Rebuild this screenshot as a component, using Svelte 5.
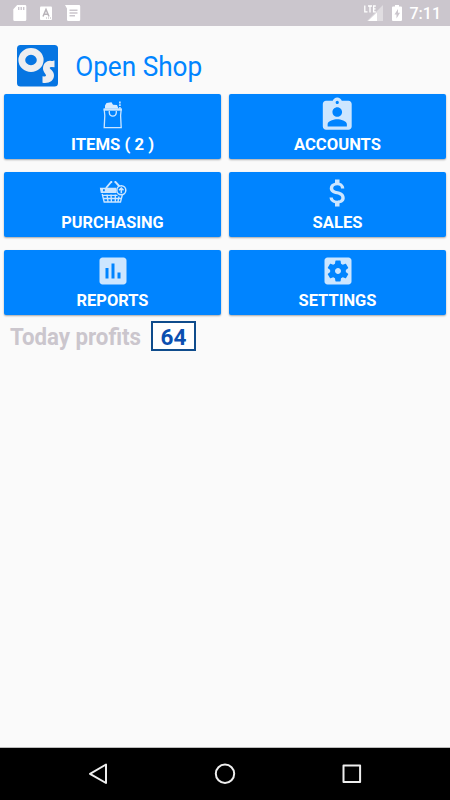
<script>
  const tiles = [
    { icon: 'bag', label: 'ITEMS ( 2 )', width: 83 },
    { icon: 'accounts', label: 'ACCOUNTS', width: 87 },
    { icon: 'basket', label: 'PURCHASING', width: 102.5 },
    { icon: 'dollar', label: 'SALES', width: 50 },
    { icon: 'chart', label: 'REPORTS', width: 72 },
    { icon: 'gear', label: 'SETTINGS', width: 78 }
  ];
</script>

<div class="screen">
  <header class="status">
    <div class="left">
      <svg width="82" height="26" viewBox="0 0 82 26" fill="#fff">
        <path fill-rule="evenodd" d="M17.2 5H25q1.3 0 1.3 1.3v13.4q0 1.3-1.3 1.3H14.600q-1.300 0-1.300-1.300V9.200zM18 7v3h1.400V7zm2.500 0v3h1.400V7zM23 7v3h1.400V7z" />
        <rect x="40" y="6.500" width="12" height="13.500" rx="1" />
        <path d="m43 16.500 3-7 3 7m-5-2.300h4" fill="none" stroke="#b9b4ba" stroke-width="1.500" />
        <path d="M46 18h5" stroke="#b9b4ba" stroke-dasharray="1 1" />
        <path fill-rule="evenodd" d="M65 5h14q1.200 0 1.200 1.200v13.600Q80.200 21 79 21H68.300q-1.300 0-1.300-1.300V8.500zM69.500 9.500V11h8V9.500zm0 2.800v1.500h8v-1.500zm0 2.800v1.500h5.500v-1.500z" />
      </svg>
    </div>
    <div class="right">
      <svg width="42" height="26" viewBox="364 0 42 26">
        <path d="M384 5v16h-16z" fill="#fff" opacity=".4" />
        <path d="M378 12.500V21h-9z" fill="#fff" />
        <path d="M365.800 5.500v6.300h2.700M369 6h4m-2 0v6.500M376.800 6h-2.200v5.800h2.200m-2-2.900h1.800" fill="none" stroke="#fff" stroke-width="1.300" />
        <path fill="#fff" fill-rule="evenodd" d="M396 5h4v1.500h2q1 0 1 1V20q0 1-1 1h-8q-1 0-1-1V7.500q0-1 1-1h2zM399 9l-3.500 5.500h2V18.500l3.500-5.800h-2z" />
      </svg>
      <span class="clock">7:11</span>
    </div>
  </header>

  <div class="brand">
    <svg width="41" height="42" viewBox="0 0 41 42">
      <rect width="41" height="41.500" rx="3.500" fill="#0675e2" />
      <ellipse cx="14" cy="15" rx="9.200" ry="8.600" fill="none" stroke="#eeeef0" stroke-width="6.800" />
      <path d="M37.500 15.500v6.700q-5.200-.7-4.800.8c.4 1.500 4.300 3 4.300 7.300 0 5.700-5 8.500-11.500 7.500v-6.500q3.500.5 3.500-.8c0-1.700-3-3.500-3-7 0-5.500 4.500-8.300 8-7.500 2 .4 2.500-.5 3.500-.5z" fill="#eeeef0" />
    </svg>
    <svg class="title" width="140" height="40" viewBox="0 0 140 40"><text x="0.200" y="28.800" textLength="127" lengthAdjust="spacingAndGlyphs">Open Shop</text></svg>
  </div>

  <main class="grid">
    {#each tiles as t}
      <button>
        <span class="icon">
          {#if t.icon === 'bag'}
            <svg width="36" height="36" viewBox="0 0 36 36">
              <path d="M9.200 12.500h17l-.6 6 .6 12.100H9.200l.6-12.100z" fill="none" stroke="#cde6ff" stroke-width="1.300" />
              <path d="M8.600 11.300h18.200v2.400H8.600z" fill="#cde6ff" opacity=".85" />
              <path d="M10 11.500V8.500l1.500-2.500 5-.7 1.500 2.500 4 .2 1.500 3.500z" fill="#d7ebff" />
              <path d="M24.900 4.500v7.500" stroke="#cde6ff" stroke-width="1.600" stroke-dasharray="1.900 .8" />
              <path d="M14.300 14v2q.5 3.200 3.500 3.200t3.500-3.200v-2" fill="none" stroke="#cde6ff" stroke-width="1.300" />
            </svg>
          {:else if t.icon === 'accounts'}
            <svg class="large" width="38.500" height="38.500" viewBox="0 0 24 24"><path d="M19 3h-4.180C14.400 1.840 13.300 1 12 1c-1.300 0-2.400.84-2.820 2H5c-1.100 0-2 .9-2 2v14c0 1.100.9 2 2 2h14c1.100 0 2-.9 2-2V5c0-1.100-.9-2-2-2zm-7 0c.55 0 1 .45 1 1s-.45 1-1 1-1-.45-1-1 .45-1 1-1zm0 4c1.660 0 3 1.340 3 3s-1.340 3-3 3-3-1.340-3-3 1.340-3 3-3zm6 12H6v-1.400c0-2 4-3.100 6-3.100s6 1.100 6 3.100V19z" /></svg>
          {:else if t.icon === 'basket'}
            <svg width="36" height="36" viewBox="0 0 36 36">
              <path d="m11 13 5.200-6h1M19.500 7h1l4.500 5" fill="none" stroke="#cde6ff" stroke-width="1.900" />
              <path fill-rule="evenodd" d="M4.800 12.800h16.400q-.8 2.700.5 5.200H5.800zM8 14.300v2h1.800v-2z" />
              <path d="m7.200 19 2 8h16.300l1.800-7M7.500 20.300h15M8.500 23.500h18M12 19.500l1 7M16 19.500l.4 7M20.300 19.500v7M24 21.500l-1 5" fill="none" stroke="#cde6ff" stroke-width="1.350" />
              <circle cx="26.300" cy="15.300" r="4.500" fill="#0084ff" stroke="#cde6ff" stroke-width="1.500" />
              <path d="M26.300 18.200v-5m-2.200 2.100 2.200-2.200 2.200 2.200" fill="none" stroke="#cde6ff" stroke-width="1.500" />
            </svg>
          {:else if t.icon === 'dollar'}
            <svg width="36" height="36" viewBox="0 0 24 24"><path d="M11.800 10.900c-2.270-.59-3-1.200-3-2.150 0-1.090 1.010-1.850 2.700-1.850 1.780 0 2.440.85 2.500 2.100h2.210c-.07-1.720-1.120-3.300-3.210-3.810V3h-3v2.160c-1.940.42-3.500 1.680-3.500 3.610 0 2.310 1.910 3.460 4.700 4.130 2.500.6 3 1.480 3 2.410 0 .69-.49 1.790-2.700 1.790-2.060 0-2.870-.92-2.980-2.100h-2.200c.12 2.190 1.760 3.420 3.680 3.830V21h3v-2.150c1.950-.37 3.500-1.500 3.500-3.550 0-2.840-2.430-3.810-4.700-4.400z" /></svg>
          {:else if t.icon === 'chart'}
            <svg width="36" height="36" viewBox="0 0 24 24"><path d="M19 3H5c-1.100 0-2 .9-2 2v14c0 1.100.9 2 2 2h14c1.100 0 2-.9 2-2V5c0-1.100-.9-2-2-2zM9 17H7v-7h2v7zm4 0h-2V7h2v10zm4 0h-2v-4h2v4z" /></svg>
          {:else}
            <svg width="36" height="36" viewBox="0 0 24 24"><path d="M12 10c-1.100 0-2 .9-2 2s.9 2 2 2 2-.9 2-2-.9-2-2-2zm7-7H5c-1.110 0-2 .9-2 2v14c0 1.100.89 2 2 2h14c1.110 0 2-.9 2-2V5c0-1.100-.89-2-2-2zm-1.750 9c0 .23-.02.46-.05.680l1.480 1.160c.13.11.17.3.08.450l-1.400 2.420c-.09.15-.27.21-.43.150l-1.740-.7c-.36.28-.76.510-1.180.690l-.26 1.850c-.03.17-.18.3-.35.3h-2.800c-.17 0-.32-.13-.35-.29l-.26-1.850c-.43-.18-.82-.41-1.180-.69l-1.740.7c-.16.06-.34 0-.43-.15l-1.400-2.420c-.09-.15-.05-.34.08-.45l1.480-1.160c-.03-.23-.05-.46-.05-.69 0-.23.02-.46.05-.68l-1.480-1.160c-.13-.11-.17-.3-.08-.45l1.400-2.420c.09-.15.27-.21.43-.15l1.740.7c.36-.28.76-.51 1.180-.69l.26-1.850c.03-.17.18-.3.35-.3h2.800c.17 0 .32.13.35.29l.26 1.850c.43.18.82.41 1.180.69l1.740-.7c.16-.06.34 0 .43.15l1.400 2.420c.09.15.05.34-.08.45l-1.480 1.160c.03.23.05.46.05.69z" /></svg>
          {/if}
        </span>
        <svg class="label" width="120" height="20" viewBox="0 0 120 20"><text x={59.5 - t.width / 2} y="14.2" textLength={t.width} lengthAdjust="spacingAndGlyphs">{t.label}</text></svg>
      </button>
    {/each}
  </main>

  <section class="profits">
    <svg class="caption" width="140" height="30" viewBox="0 0 140 30"><text x="0" y="23.700" textLength="131" lengthAdjust="spacingAndGlyphs">Today profits</text></svg>
    <output>64</output>
  </section>

  <nav>
    <svg width="450" height="52" viewBox="0 0 450 52" fill="none" stroke="#eee" stroke-width="2" stroke-linejoin="round">
      <path d="M106 16.500v18.500l-16-9.200z" />
      <circle cx="225" cy="25.700" r="9.200" />
      <rect x="343.500" y="17.500" width="16.600" height="16.600" />
    </svg>
  </nav>
</div>

<style>
  .screen { width: 450px; height: 800px; display: flex; flex-direction: column; background: #fafafa; font-family: Roboto, sans-serif; overflow: hidden; }
  svg { display: block; flex: none; overflow: visible; }
  .status { height: 26px; flex: none; background: #cbc6cd; display: flex; justify-content: space-between; }
  .right { display: flex; align-items: center; padding-right: 9px; }
  .clock { color: #fff; font-size: 16px; font-weight: 500; line-height: 26px; margin-left: 5px; padding-top: 2px; }
  .brand { display: flex; height: 49px; padding: 19px 0 0 17px; }
  .title { margin: 2px 0 0 17px; }
  .title text { font-size: 27.500px; fill: #0084ff; }
  .grid { display: grid; grid-template-columns: 217px 217px; grid-auto-rows: 65.300px; gap: 12.700px 8px; padding: 0 4px; }
  button { border: 0; padding: 3.200px 0 0; border-radius: 2px; background: #0084ff; box-shadow: 0 1px 2px #0005; display: flex; flex-direction: column; align-items: center; justify-content: flex-start; }
  .icon { height: 36px; display: flex; justify-content: center; fill: #cde6ff; }
  .large { margin-top: -1.500px; }
  .label { margin-top: 2.500px; }
  .label text { font: bold 17px Roboto, sans-serif; fill: #fff; }
  .profits { display: flex; padding: 6px 0 0 10px; }
  .caption { margin-right: 1px; }
  .caption text { font: bold 23px Roboto, sans-serif; fill: #cbc6cd; }
  output { box-sizing: border-box; width: 45px; height: 30px; border: 2px solid #0f4c8c; background: #fff; color: #0b4fb0; font-size: 22.500px; font-weight: bold; line-height: 28px; text-align: center; }
  nav { margin-top: auto; background: #000; height: 52px; border-top: 1px solid #bbb; }
</style>
